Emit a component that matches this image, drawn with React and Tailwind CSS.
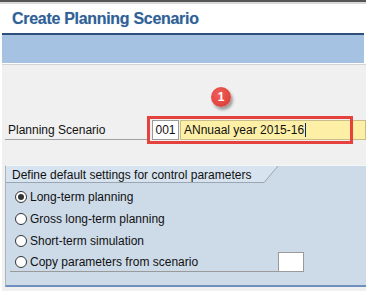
import React from 'react'

function Radio({ checked }) {
  return (
    <span className="relative flex h-[12px] w-[12px] shrink-0 items-center justify-center rounded-full border border-[#333] bg-white">
      {checked && <span className="h-[6px] w-[6px] rounded-full bg-[#333]" />}
    </span>
  )
}

function Option({ label, checked }) {
  return (
    <div className="flex h-[22px] items-center gap-[3px] pl-[9px]">
      <Radio checked={checked} />
      <span className="text-[12px] text-[#111]">{label}</span>
    </div>
  )
}

export default function App() {
  return (
    <div className="relative h-[291px] w-[366px] overflow-hidden bg-white font-['Liberation_Sans',Arial,sans-serif]">
      <div className="h-[2px] bg-[#555]" />
      <div className="h-[2px] bg-[#d8d8d8]" />
      <div className="flex h-[29px] items-center pl-[12px]">
        <h1 className="text-[16px] font-bold tracking-[-0.3px] text-[#2f6096]" style={{ textShadow: '0 0 1px rgba(47,96,150,0.3)' }}>
          Create Planning Scenario
        </h1>
      </div>
      <div className="ml-[2px] mr-[2px] h-[2px] bg-[#2c4f7c]" />
      <div className="ml-[2px] mr-[2px] h-[28px] bg-[#a6c2e3]" />
      <div className="ml-[2px] mr-[2px] h-[1px] bg-white" />
      <div className="ml-[2px] h-[1px] bg-[#d4d4d4]" />

      <div className="ml-[2px] h-[230px] bg-[#f0f0f0] pt-[55px]">
        {/* planning scenario row */}
        <div className="relative flex h-[20px] items-stretch">
          <div className="ml-[3px] flex w-[142px] items-center border-b border-[#a0a0a0] pl-[3px] text-[12px] text-[#111]">
            Planning Scenario
          </div>
          <div className="ml-[5px] flex w-[27px] items-center justify-center border border-[#9a9a9a] bg-white text-[12px] text-[#111]">
            001
          </div>
          <div className="ml-[1px] flex flex-1 items-center border border-[#c9bd8a] bg-[#fdf0a6] pl-[3px] text-[12px] text-[#111]">
            ANnuaal year 2015-16
            <span className="ml-[1px] h-[14px] w-[1px] bg-[#0a2a6a]" />
          </div>
          <div className="absolute left-[145px] top-[-4px] h-[28px] w-[206px] border-[3px] border-[#e5423d]" />
          <div className="absolute left-[209px] top-[-33px] flex h-[20px] w-[20px] items-center justify-center rounded-full bg-[radial-gradient(circle_at_40%_35%,#f0605a,#d93530)] text-[12px] font-bold text-white shadow-[2px_3px_3px_rgba(0,0,0,0.35)]">
            1
          </div>
        </div>

        {/* group box */}
        <div className="ml-[3px] mt-[25px] h-[122px] border-l border-t border-b-2 border-l-[#a9b4be] border-t-[#f4f7fa] border-b-[#6f8fbf] bg-[#cddbe9]">
          <div className="relative flex h-[17px] w-[272px] items-center">
            <div className="absolute inset-0 bg-[#d7e3ee] [clip-path:polygon(0_0,100%_0,94.5%_100%,0_100%)]" />
            <svg className="absolute inset-0" width="272" height="17" viewBox="0 0 272 17">
              <line x1="0" y1="16.5" x2="258" y2="16.5" stroke="#9aa7b3" strokeWidth="1" />
              <line x1="258" y1="16.5" x2="272" y2="0" stroke="#9aa7b3" strokeWidth="1" />
            </svg>
            <span className="relative whitespace-nowrap pl-[6px] text-[12px] text-[#111]">
              Define default settings for control parameters
            </span>
          </div>
          <div className="pt-[3px]">
            <Option label="Long-term planning" checked />
            <Option label="Gross long-term planning" />
            <Option label="Short-term simulation" />
            <div className="flex items-end">
              <div className="ml-[4px] flex h-[20px] w-[268px] items-center gap-[3px] border-b border-[#9a9a9a] pl-[5px]">
                <Radio />
                <span className="text-[12px] text-[#111]">Copy parameters from scenario</span>
              </div>
              <div className="h-[20px] w-[26px] border border-[#9a9a9a] bg-white" />
            </div>
          </div>
        </div>
      </div>
    </div>
  )
}
